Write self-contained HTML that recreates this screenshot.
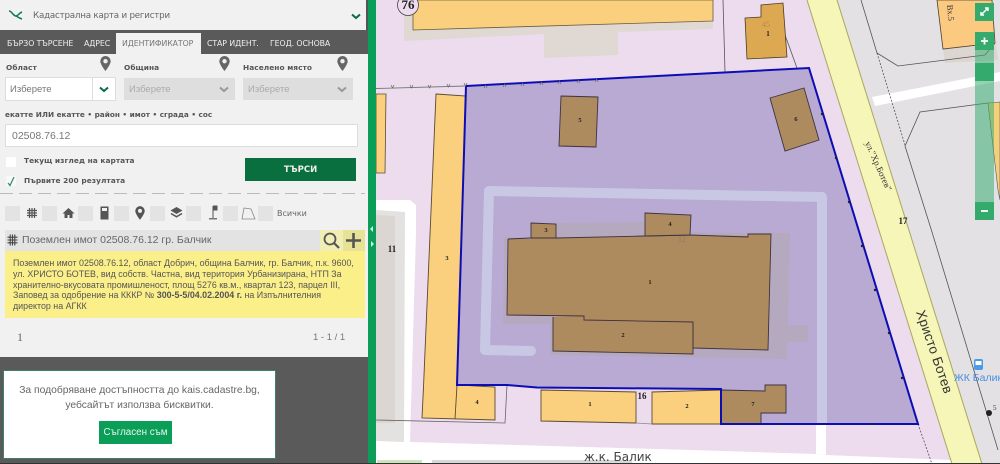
<!DOCTYPE html>
<html><head><meta charset="utf-8"><style>
*{box-sizing:border-box}
html,body{margin:0;padding:0;width:1000px;height:464px;overflow:hidden;background:#5a5a5a}
body{font-family:"Liberation Sans",sans-serif;position:relative}
#w{position:absolute;left:0;top:0;width:1000px;height:464px;filter:blur(.35px)}
.a{position:absolute;white-space:nowrap}
.tab{position:absolute;top:30px;height:24px;line-height:27px;font-size:7.8px;color:#f0f0f0;white-space:nowrap;font-family:"DejaVu Sans",sans-serif;letter-spacing:-.08px}
.lb{position:absolute;font:bold 7.4px "DejaVu Sans",sans-serif;color:#555;white-space:nowrap;letter-spacing:.05px}
.sel{position:absolute;top:78px;height:22px;background:#dedede;color:#aaa;font-size:9.5px;line-height:23px;padding-left:5px}
.sq{position:absolute;top:206px;width:15px;height:15px;background:#e3e3e3}
svg{position:absolute;overflow:hidden}
</style></head><body><div id="w">
<svg style="left:376px;top:0" width="624" height="464" viewBox="376 0 624 464" font-family="Liberation Serif, serif">
<rect x="376" y="0" width="624" height="464" fill="#eddcee"/>
<polygon points="837,0 1000,0 1000,464 982,464" fill="#e3e1e3"/>
<polygon points="376,442 410,442 416,232 416,205 410,200 376,200" fill="#fff"/>
<polygon points="376,210 405,212 404,442 376,441" fill="#e4e2e0"/>
<polygon points="376,215 395,216 395,423 376,423" fill="#dbd6d1"/>
<polygon points="376,442 410,442 690,450 815,454 825,455 951,460 955,464 376,464" fill="#fff"/>
<polygon points="816,424 826,424 826,455 816,454" fill="#fff"/>
<rect x="377" y="460" width="45" height="3" fill="#cfe3bf"/>
<rect x="432" y="460" width="200" height="3" fill="#d8d8d8"/>
<polygon points="404,14 404,41 544,34 544,58 618,55 618,32 713,29 713,10" fill="#dfd8d3"/>
<polygon points="413,0 413,30 713,21 713,0" fill="#fad07f" stroke="#6a5a3c" stroke-width=".8"/>
<circle cx="408" cy="5" r="10.5" fill="#eddcee" stroke="#444" stroke-width=".8"/>
<text x="408" y="9" font-size="13" font-weight="bold" text-anchor="middle" fill="#222">76</text>
<polygon points="376,94 386,94 385,173 376,173" fill="#fad07f" stroke="#5a4a30" stroke-width=".8"/>
<polygon points="436,94 466,96 457,385 495,387 495,420 422,418 423.5,387" fill="#fad07f" stroke="#5a4a30" stroke-width=".9"/>
<line x1="457" y1="385" x2="455" y2="419" stroke="#5a4a30" stroke-width=".9"/>
<polyline points="376,420 505,423 507,385" fill="none" stroke="#666" stroke-width=".8"/>
<polygon points="541,390 636,392 636,423 541,421" fill="#fad07f" stroke="#5a4a30" stroke-width=".9"/>
<polygon points="652,392 721,390 721,424 652,424" fill="#fad07f" stroke="#5a4a30" stroke-width=".9"/>
<line x1="636" y1="423" x2="652" y2="424" stroke="#888" stroke-width=".8"/>
<polygon points="807,0 837,0 982,464 952,464" fill="#f6f6b9"/>
<line x1="807" y1="0" x2="952" y2="464" stroke="#aaa75f" stroke-width="1"/>
<line x1="837" y1="0" x2="982" y2="464" stroke="#aaa75f" stroke-width="1"/>
<polygon points="872,97 1000,72 1000,81 875,106" fill="#fff"/>
<polygon points="943,49 996,43 998,60 945,63" fill="#dcd6d2"/>
<polygon points="937,0 992,0 995,43 943,49" fill="#fbc980" stroke="#4a4030" stroke-width=".8"/>
<polyline points="861,0 877,53 898,66 985,55 995,43" fill="none" stroke="#555" stroke-width=".8"/>
<line x1="877" y1="53" x2="905" y2="145" stroke="#555" stroke-width=".8" stroke-dasharray="2 1.5"/>
<polyline points="988,103 920,112 905,146 932,232 998,450" fill="none" stroke="#555" stroke-width=".8"/>
<polygon points="988,103 1000,102 1000,200 998,190" fill="#f5d07c" stroke="#555" stroke-width=".6"/>
<line x1="723" y1="0" x2="725" y2="72" stroke="#555" stroke-width=".8"/>
<line x1="785" y1="35" x2="797" y2="68" stroke="#555" stroke-width=".8"/>
<polygon points="745,18 761,17 761,5 783,3 787,57 747,59" fill="#dca952" stroke="#4a3a20" stroke-width=".8"/>
<text x="766" y="27" font-size="8" fill="#b88a40" text-anchor="middle">45</text>
<text x="768" y="36" font-size="7" font-weight="bold" fill="#222" text-anchor="middle">1</text>
<line x1="918" y1="424" x2="932" y2="464" stroke="#555" stroke-width=".8" stroke-dasharray="2 1.5"/>

<polygon points="466,86 809,68 918,424 721,424 721,389 537,387.5 507,385 457,385" fill="#b8aad3"/>
<path d="M822,197 V424" fill="none" stroke="#c9c8e4" stroke-width="10"/>
<path d="M822,197 L489,191 L485,350 L531,351" fill="none" stroke="#c9c8e4" stroke-width="10" stroke-linecap="round" stroke-linejoin="round"/>
<polygon points="556,223 645,222 645,232 790,233 788,325 808,325 808,342 787,342 787,359 550,355 550,324 503,324 504,237 556,237" fill="#b5a9bf"/>
<polygon points="508,239 531,239 531,223 556,224 556,238 645,236 645,213 691,215 690,235 748,236 748,234 771,234 768,350 693,348 693,354 553,351 553,317 584,316 507,315" fill="#ae8a5f"/>
<polyline points="508,239 531,238 556,238 645,236 690,235 748,237 748,234 771,234 768,350 693,348 693,322 584,320 584,316 507,315 508,239" fill="none" stroke="#3e3340" stroke-width=".9"/>
<polygon points="531,223 556,224 556,238 531,238" fill="#ae8a5f" stroke="#3e3340" stroke-width=".9"/>
<polygon points="645,213 691,215 690,235 645,236" fill="#ae8a5f" stroke="#3e3340" stroke-width=".9"/>
<polyline points="553,317 553,351 693,354 693,322" fill="none" stroke="#3e3340" stroke-width=".9"/>
<polygon points="561,96 598,97 596,147 559,146" fill="#ae8a5f" stroke="#3e3340" stroke-width=".9"/>
<polygon points="770,98 804,88 819,140 785,151" fill="#ae8a5f" stroke="#3e3340" stroke-width=".9"/>
<polygon points="721,390 765,391 765,385 786,385 786,413 761,413 761,424 721,424" fill="#ae8a5f" stroke="#3e3340" stroke-width=".9"/>
<polygon points="466,86 809,68 918,424 721,424 721,389 537,387.5 507,385 457,385" fill="none" stroke="#0d0db4" stroke-width="2"/>
<line x1="376" y1="88.5" x2="466" y2="86" stroke="#777" stroke-width=".9"/>
<g fill="none" stroke="#666" stroke-width=".7">
<path d="M391,85l1.5,3l1.5,-3M410,85l1.5,3l1.5,-3M428,85l1.5,3l1.5,-3M447,84l1.5,3l1.5,-3M464,83l1.5,3l1.5,-3M484,88l1.5,-3l1.5,3M503,87l1.5,-3l1.5,3M521,86l1.5,-3l1.5,3M540,85l1.5,-3l1.5,3M558,84l1.5,-3l1.5,3M577,83l1.5,-3l1.5,3M595,82l1.5,-3l1.5,3"/>
</g>
<g fill="#222">
<circle cx="822" cy="114" r="1.2"/><circle cx="836" cy="158" r="1.2"/><circle cx="849" cy="202" r="1.2"/><circle cx="862" cy="246" r="1.2"/><circle cx="875" cy="290" r="1.2"/><circle cx="889" cy="333" r="1.2"/><circle cx="902" cy="378" r="1.2"/><circle cx="779" cy="424" r="1"/><circle cx="825" cy="424" r="1"/><circle cx="871" cy="424" r="1"/>
</g>
<g font-size="6.5" font-weight="bold" fill="#222" text-anchor="middle">
<text x="580" y="122">5</text><text x="796" y="121">6</text><text x="546" y="232">3</text><text x="670" y="226">4</text>
<text x="650" y="284">1</text><text x="623" y="337">2</text><text x="753" y="406">7</text><text x="447" y="260">3</text><text x="477" y="404">4</text><text x="590" y="406">1</text><text x="687" y="408">2</text>
</g>
<text x="682" y="242" font-size="8" fill="#8f7a6a" text-anchor="middle">12</text>
<text x="392" y="252" font-size="9" font-weight="bold" fill="#222" text-anchor="middle">11</text>
<text x="642" y="399" font-size="9" font-weight="bold" fill="#222" text-anchor="middle">16</text>
<text x="903" y="224" font-size="9" font-weight="bold" fill="#222" text-anchor="middle">17</text>
<text transform="translate(947,5) rotate(85)" font-size="8.500" fill="#333">Вх.5</text>
<text transform="translate(865,143) rotate(66)" font-size="9" fill="#333">ул."Хр.Ботев"</text>
<text transform="translate(916,312) rotate(71)" font-family="Liberation Sans, sans-serif" font-size="13.500" fill="#333" letter-spacing=".2">Христо Ботев</text>
<text x="584" y="461" font-family="DejaVu Sans, sans-serif" font-size="12" fill="#444">ж.к. Балик</text>
<rect x="974" y="359" width="9" height="11" rx="2" fill="#4a9be8"/><rect x="975.5" y="361" width="6" height="4" fill="#fff"/>
<text x="954" y="381" font-family="Liberation Sans, sans-serif" font-size="10.500" fill="#4a8fe0">ЖК Балик</text>
<circle cx="989" cy="413" r="3" fill="#222"/>
<text x="993" y="410" font-size="7" fill="#333">5</text>
<rect x="975" y="32" width="19" height="188" fill="#3aaf72" opacity=".55"/>
<rect x="975" y="3" width="19" height="18" fill="#34ab6c"/>
<rect x="975" y="32" width="19" height="18" fill="#34ab6c"/>
<rect x="975" y="63" width="19" height="18" fill="#34ab6c"/>
<rect x="975" y="202" width="19" height="18" fill="#34ab6c"/>
<path d="M981,15l7,-7M981,12v3h3M985,8h3v3" stroke="#fff" stroke-width="1.500" fill="none"/>
<path d="M981,41h7M984.500,37.500v7" stroke="#fff" stroke-width="1.800" fill="none"/>
<path d="M981,211h7" stroke="#fff" stroke-width="1.800"/>
</svg>

<div class="a" style="left:368px;top:0;width:8px;height:464px;background:#0a9e58"></div>
<div class="a" style="left:370px;top:226px;width:0;height:0;border:3px solid transparent;border-right-color:#cfe;border-left:0"></div>
<div class="a" style="left:371px;top:241px;width:0;height:0;border:3px solid transparent;border-left-color:#cfe;border-right:0"></div>

<div class="a" style="left:0;top:0;width:368px;height:357px;background:#f1f1f1"></div>
<div class="a" style="left:366px;top:0;width:2px;height:30px;background:#555"></div>
<svg style="left:8px;top:9px" width="16" height="12" viewBox="0 0 16 12"><path d="M1,2C4,2 5,7 8,7C10,7 11,4 14,3M8,7C10,8 11,9 14,10" fill="none" stroke="#0a7a4a" stroke-width="1.500"/></svg>
<div class="a" style="left:33px;top:10px;font-size:8.700px;line-height:12px;color:#666;font-family:'DejaVu Sans',sans-serif;letter-spacing:-.2px">Кадастрална карта и регистри</div>
<svg style="left:351px;top:13px" width="10" height="7"><path d="M1,1.500L5,5L9,1.500" fill="none" stroke="#0a6a4a" stroke-width="2"/></svg>

<div class="a" style="left:0;top:30px;width:368px;height:24px;background:#5a5a5a"></div>
<div class="a" style="left:116px;top:33px;width:85px;height:21px;background:#f1f1f1"></div>
<div class="tab" style="left:7px">БЪРЗО ТЪРСЕНЕ</div>
<div class="tab" style="left:84px">АДРЕС</div>
<div class="tab" style="left:122px;color:#777">ИДЕНТИФИКАТОР</div>
<div class="tab" style="left:207px">СТАР ИДЕНТ.</div>
<div class="tab" style="left:270px">ГЕОД. ОСНОВА</div>

<div class="lb" style="left:6px;top:63px">Област</div>
<div class="lb" style="left:124px;top:63px">Община</div>
<div class="lb" style="left:243px;top:63px">Населено място</div>
<svg style="left:100px;top:56px" width="11" height="15" viewBox="0 0 11 15"><path fill-rule="evenodd" d="M5.500,0A5.200,5.200 0 0 0 .3,5.200C.3,8.500 5.500,15 5.500,15S10.700,8.500 10.700,5.200A5.200,5.200 0 0 0 5.500,0ZM5.500,3A2.200,2.200 0 1 1 5.500,7.400A2.200,2.200 0 0 1 5.500,3Z" fill="#666"/></svg>
<svg style="left:219px;top:56px" width="11" height="15" viewBox="0 0 11 15"><path fill-rule="evenodd" d="M5.500,0A5.200,5.200 0 0 0 .3,5.200C.3,8.500 5.500,15 5.500,15S10.700,8.500 10.700,5.200A5.200,5.200 0 0 0 5.500,0ZM5.500,3A2.200,2.200 0 1 1 5.500,7.400A2.200,2.200 0 0 1 5.500,3Z" fill="#666"/></svg>
<svg style="left:337px;top:56px" width="11" height="15" viewBox="0 0 11 15"><path fill-rule="evenodd" d="M5.500,0A5.200,5.200 0 0 0 .3,5.200C.3,8.500 5.500,15 5.500,15S10.700,8.500 10.700,5.200A5.200,5.200 0 0 0 5.500,0ZM5.500,3A2.200,2.200 0 1 1 5.500,7.400A2.200,2.200 0 0 1 5.500,3Z" fill="#666"/></svg>

<div class="a" style="left:5px;top:77px;width:111px;height:24px;background:#fff;border:1px solid #ddd;font-size:9.500px;line-height:23px;padding-left:4px;color:#777">Изберете</div>
<div class="a" style="left:92px;top:78px;width:1px;height:22px;background:#ddd"></div>
<svg style="left:99px;top:86px" width="10" height="7"><path d="M1,1.500L5,5L9,1.500" fill="none" stroke="#0a6a4a" stroke-width="2"/></svg>
<div class="sel" style="left:124px;width:111px">Изберете</div>
<svg style="left:219px;top:86px" width="10" height="7"><path d="M1,1.500L5,5L9,1.500" fill="none" stroke="#999" stroke-width="2"/></svg>
<div class="sel" style="left:243px;width:110px">Изберете</div>
<svg style="left:337px;top:86px" width="10" height="7"><path d="M1,1.500L5,5L9,1.500" fill="none" stroke="#999" stroke-width="2"/></svg>

<div class="lb" style="left:5px;top:110px;font-size:7.300px;letter-spacing:0">екатте ИЛИ екатте • район • имот • сграда • сос</div>
<div class="a" style="left:5px;top:124px;width:353px;height:23px;background:#fff;border:1px solid #ddd;font-size:10.500px;line-height:22px;padding-left:6px;color:#777">02508.76.12</div>

<div class="a" style="left:6px;top:157px;width:10px;height:10px;background:#fff"></div>
<div class="lb" style="left:24px;top:156px">Текущ изглед на картата</div>
<div class="a" style="left:6px;top:176px;width:10px;height:10px;background:#f8f8f8"></div>
<svg style="left:7px;top:176px" width="9" height="11"><path d="M1,7L3,9.500L7,1" fill="none" stroke="#2a8a6a" stroke-width="1.200"/></svg>
<div class="lb" style="left:24px;top:176px">Първите 200 резултата</div>
<div class="a" style="left:245px;top:158px;width:111px;height:23px;background:#0a6f3f;color:#eee;font-size:8.500px;font-weight:bold;line-height:24px;text-align:center;font-family:'DejaVu Sans',sans-serif">ТЪРСИ</div>

<div class="a" style="left:0;top:193px;width:365px;height:1px;background:repeating-linear-gradient(90deg,#bbb 0 13px,transparent 13px 19px)"></div>

<div class="sq" style="left:5px"></div><div class="sq" style="left:42px"></div><div class="sq" style="left:78px"></div><div class="sq" style="left:114px"></div><div class="sq" style="left:150px"></div><div class="sq" style="left:186px"></div><div class="sq" style="left:223px"></div><div class="sq" style="left:258px"></div>
<svg style="left:26px;top:207px" width="12" height="12" viewBox="0 0 12 12"><path d="M3.500,1V11M6,1V11M8.500,1V11M1,3.500H11M1,6H11M1,8.500H11" stroke="#555" stroke-width="1.200"/></svg>
<svg style="left:62px;top:207px" width="13" height="12" viewBox="0 0 13 12"><path d="M6.500,1L12.500,6.500H10.500V11H7.500V8H5.500V11H2.500V6.500H.5Z" fill="#555"/></svg>
<svg style="left:100px;top:206px" width="9" height="14" viewBox="0 0 9 14"><path fill-rule="evenodd" d="M.5,.5H8.500V13.500H.5ZM2,2V5H7V2Z" fill="#555"/></svg>
<svg style="left:135px;top:206px" width="10" height="14" viewBox="0 0 11 15"><path fill-rule="evenodd" d="M5.500,0A5.200,5.200 0 0 0 .3,5.200C.3,8.500 5.500,15 5.500,15S10.700,8.500 10.700,5.200A5.200,5.200 0 0 0 5.500,0ZM5.500,3A2.200,2.200 0 1 1 5.500,7.400A2.200,2.200 0 0 1 5.500,3Z" fill="#555"/></svg>
<svg style="left:170px;top:206px" width="13" height="14" viewBox="0 0 13 14"><path d="M6.500,1L12.500,4.500L6.500,8L.5,4.500Z" fill="#555"/><path d="M1,7.500L6.500,10.800L12,7.500" fill="none" stroke="#555" stroke-width="1.500"/></svg>
<svg style="left:207px;top:205px" width="12" height="16" viewBox="0 0 12 16"><path d="M6,1V13M6,1H10V5H6" stroke="#555" stroke-width="1" fill="#555"/><rect x="2" y="13" width="8" height="1.500" fill="#777"/></svg>
<svg style="left:241px;top:207px" width="15" height="13" viewBox="0 0 15 13"><path d="M3,1L10,2L14,12L1,12Z" fill="none" stroke="#888" stroke-width=".8"/></svg>
<div class="a" style="left:277px;top:208px;font-size:8px;line-height:11px;color:#666;font-family:'DejaVu Sans',sans-serif">Всички</div>

<div class="a" style="left:5px;top:230px;width:315px;height:21px;background:#e3e3e3"></div>
<div class="a" style="left:320px;top:230px;width:23px;height:21px;background:#f0eeb4"></div>
<div class="a" style="left:343px;top:230px;width:22px;height:21px;background:#e6e296"></div>
<svg style="left:7px;top:234px" width="11" height="12" viewBox="0 0 11 12"><path d="M3.200,.5V11.500M5.500,.5V11.500M7.800,.5V11.500M.5,3.200H10.500M.5,6H10.500M.5,8.800H10.500" stroke="#444" stroke-width="1.100"/></svg>
<div class="a" style="left:22px;top:234px;font-size:10.500px;line-height:13px;color:#666">Поземлен имот 02508.76.12 гр. Балчик</div>
<svg style="left:323px;top:232px" width="17" height="17" viewBox="0 0 17 17"><circle cx="7" cy="7" r="5.500" fill="none" stroke="#555" stroke-width="1.800"/><path d="M11,11L16,16" stroke="#555" stroke-width="2.200"/></svg>
<svg style="left:346px;top:233px" width="15" height="15"><path d="M7.500,0V15M0,7.500H15" stroke="#555" stroke-width="2.600"/></svg>

<div class="a" style="left:5px;top:251px;width:360px;height:67px;background:#fbef8a"></div>
<div class="a" style="left:13px;top:258px;font-size:8.900px;line-height:10.800px;color:#555">Поземлен имот 02508.76.12, област Добрич, община Балчик, гр. Балчик, п.к. 9600,<br>ул. ХРИСТО БОТЕВ, вид собств. Частна, вид територия Урбанизирана, НТП За<br>хранително-вкусовата промишленост, площ 5276 кв.м., квартал 123, парцел III,<br>Заповед за одобрение на КККР № <b>300-5-5/04.02.2004 г.</b> на Изпълнителния<br>директор на АГКК</div>

<div class="a" style="left:17px;top:330px;font:12px 'Liberation Serif',serif;color:#666">1</div>
<div class="a" style="left:313px;top:332px;font-size:9.500px;color:#777">1 - 1 / 1</div>

<div class="a" style="left:3px;top:370px;width:273px;height:89px;background:#fff;border:1.500px solid #3f7f68"></div>
<div class="a" style="left:3px;top:384px;width:273px;text-align:center;font-size:10.300px;line-height:14.500px;color:#666">За подобряване достъпността до kais.cadastre.bg,<br>уебсайтът използва бисквитки.</div>
<div class="a" style="left:99px;top:421px;width:73px;height:23px;background:#0a9e58;color:#e8f8ee;font-size:9.800px;line-height:23px;text-align:center">Съгласен съм</div>
<div class="a" style="left:0;top:463px;width:1000px;height:1px;background:#333"></div>
</div></body></html>
